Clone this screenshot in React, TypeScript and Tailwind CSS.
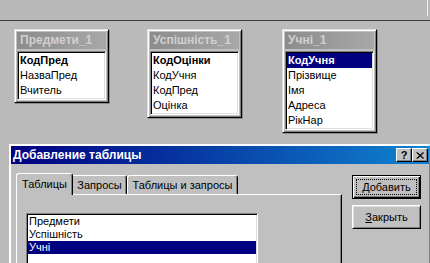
import React from 'react';

type TableBoxProps = {
    title: string;
    fields: string[];
    selected?: number;
    className?: string;
};

// field list window on the query design surface
const TableBox: React.FC<TableBoxProps> = ({ title, fields, selected, className }) => {
    return (
        <div
            className={`w-[95px] flex flex-col p-[2px] bg-[#c0c0c0] border border-t-[#dfdfdf] border-l-[#dfdfdf] border-r-[#000] border-b-[#000] shadow-[inset_1px_1px_0_#fff,inset_-1px_-1px_0_#808080,1px_1px_0_#8a8a8a] ${className ?? ''}`}
        >
            <div className="h-[17px] bg-[linear-gradient(to_right,#8c8c8c,#a8a8a8)] text-[#d0d0d0] text-[12px] font-bold leading-[17px] pl-[3px] whitespace-nowrap overflow-hidden">
                {title}
            </div>
            <div className="mt-[2px] bg-white border border-t-[#808080] border-l-[#808080] border-r-[#fff] border-b-[#fff] shadow-[inset_1px_1px_0_#000,inset_-1px_-1px_0_#dfdfdf] p-[1px]">
                {fields.map((f, i) => (
                    <div
                        key={f}
                        className={`h-[15px] leading-[15px] text-[11px] pl-[1px] whitespace-nowrap ${i === 0 ? 'font-bold' : ''} ${
                            selected === i ? 'bg-[#000080] text-white' : 'text-black'
                        }`}
                    >
                        {f}
                    </div>
                ))}
            </div>
        </div>
    );
};

const App: React.FC = () => {
    return (
        <div className="w-[430px] h-[263px] overflow-hidden bg-[#bababa] font-['Liberation_Sans',Arial,sans-serif] select-none">
            {/* strip of the window above */}
            <div className="h-[21px] bg-[#b8b8b8] border-b border-[#3c3c3c] flex">
                <div className="ml-auto mr-[2px] w-[1px] h-[16px] bg-[#f0f0f0]" />
            </div>

            <div className="h-[123px] pt-[8px] flex items-start">
                <TableBox className="ml-[14px]" title="Предмети_1" fields={['КодПред', 'НазваПред', 'Вчитель']} />
                <TableBox className="ml-[38px]" title="Успішність_1" fields={['КодОцінки', 'КодУчня', 'КодПред', 'Оцінка']} />
                <TableBox className="ml-[40px]" title="Учні_1" fields={['КодУчня', 'Прізвище', 'Імя', 'Адреса', 'РікНар']} selected={0} />
            </div>

            {/* Добавление таблицы dialog */}
            <div className="ml-[9px] w-[422px] h-[130px] bg-[#c0c0c0] border-2 border-t-[#fff] border-l-[#fff] border-r-[#808080] border-b-[#808080]">
                <div className="h-[18px] flex items-center bg-[linear-gradient(to_right,#000080,#1084d0)] pl-[2px] pr-[1px]">
                    <span className="text-white text-[12px] font-bold leading-[18px] whitespace-nowrap">Добавление таблицы</span>
                    <div className="ml-auto flex">
                        <div className="w-[16px] h-[14px] bg-[#c0c0c0] border border-t-[#fff] border-l-[#fff] border-r-[#000] border-b-[#000] shadow-[inset_-1px_-1px_0_#808080] flex items-center justify-center text-[11px] font-bold leading-none text-black">
                            ?
                        </div>
                        <div className="w-[16px] h-[14px] bg-[#c0c0c0] border border-t-[#fff] border-l-[#fff] border-r-[#000] border-b-[#000] shadow-[inset_-1px_-1px_0_#808080] flex items-center justify-center">
                            <svg width="8" height="7" viewBox="0 0 8 7">
                                <path d="M0.5 0.5 L7 6.5 M1.5 0.5 L8 6.5 M7 0.5 L0.5 6.5 M8 0.5 L1.5 6.5" stroke="#000" strokeWidth="1" fill="none" />
                            </svg>
                        </div>
                    </div>
                </div>

                <div className="flex items-start">
                    <div className="pl-[5px] pt-[9px] flex flex-col">
                        <div className="flex items-end h-[21px]">
                            <div className="relative z-10 w-[57px] h-[22px] -mb-[1px] bg-[#c0c0c0] border-t border-l border-r border-t-[#fff] border-l-[#fff] border-r-[#000] rounded-t-[3px] shadow-[inset_-1px_0_0_#808080] flex items-center justify-center text-[11px] text-black">
                                Таблицы
                            </div>
                            <div className="w-[54px] h-[19px] bg-[#c0c0c0] border-t border-r border-t-[#fff] border-r-[#000] rounded-tr-[3px] shadow-[inset_-1px_0_0_#808080] flex items-center justify-center text-[11px] text-black">
                                Запросы
                            </div>
                            <div className="w-[111px] h-[19px] bg-[#c0c0c0] border-t border-l border-r border-t-[#fff] border-l-[#fff] border-r-[#000] rounded-t-[3px] shadow-[inset_-1px_0_0_#808080] flex items-center justify-center text-[11px] text-black whitespace-nowrap">
                                Таблицы и запросы
                            </div>
                        </div>
                        <div className="w-[326px] h-[80px] bg-[#c0c0c0] border border-t-[#fff] border-l-[#fff] border-r-[#000] border-b-[#000] shadow-[inset_-1px_-1px_0_#808080] pl-[9px] pt-[18px]">
                            <div className="w-[232px] h-[70px] bg-white border border-t-[#808080] border-l-[#808080] border-r-[#fff] border-b-[#fff] shadow-[inset_1px_1px_0_#000,inset_-1px_-1px_0_#dfdfdf] p-[1px]">
                                {['Предмети', 'Успішність', 'Учні'].map((t, i) => (
                                    <div
                                        key={t}
                                        className={`h-[13px] leading-[13px] text-[11px] pl-[1px] ${i === 2 ? 'bg-[#000080] text-white' : 'text-black'}`}
                                    >
                                        {t}
                                    </div>
                                ))}
                            </div>
                        </div>
                    </div>

                    <div className="ml-[10px] pt-[11px] flex flex-col gap-[6px]">
                        <button className="w-[69px] h-[24px] bg-[#c0c0c0] border border-[#000] shadow-[inset_1px_1px_0_#fff,inset_-1px_-1px_0_#000,inset_-2px_-2px_0_#808080] p-[3px] text-[11px] text-black">
                            <span className="flex h-full w-full items-center justify-center border border-dotted border-[#000]">
                                <span className="underline">Д</span>обавить
                            </span>
                        </button>
                        <button className="w-[69px] h-[24px] bg-[#c0c0c0] border border-t-[#fff] border-l-[#fff] border-r-[#000] border-b-[#000] shadow-[inset_1px_1px_0_#dfdfdf,inset_-1px_-1px_0_#808080] flex items-center justify-center text-[11px] text-black">
                            <span className="underline">З</span>акрыть
                        </button>
                    </div>
                </div>
            </div>
        </div>
    );
};

export default App;
